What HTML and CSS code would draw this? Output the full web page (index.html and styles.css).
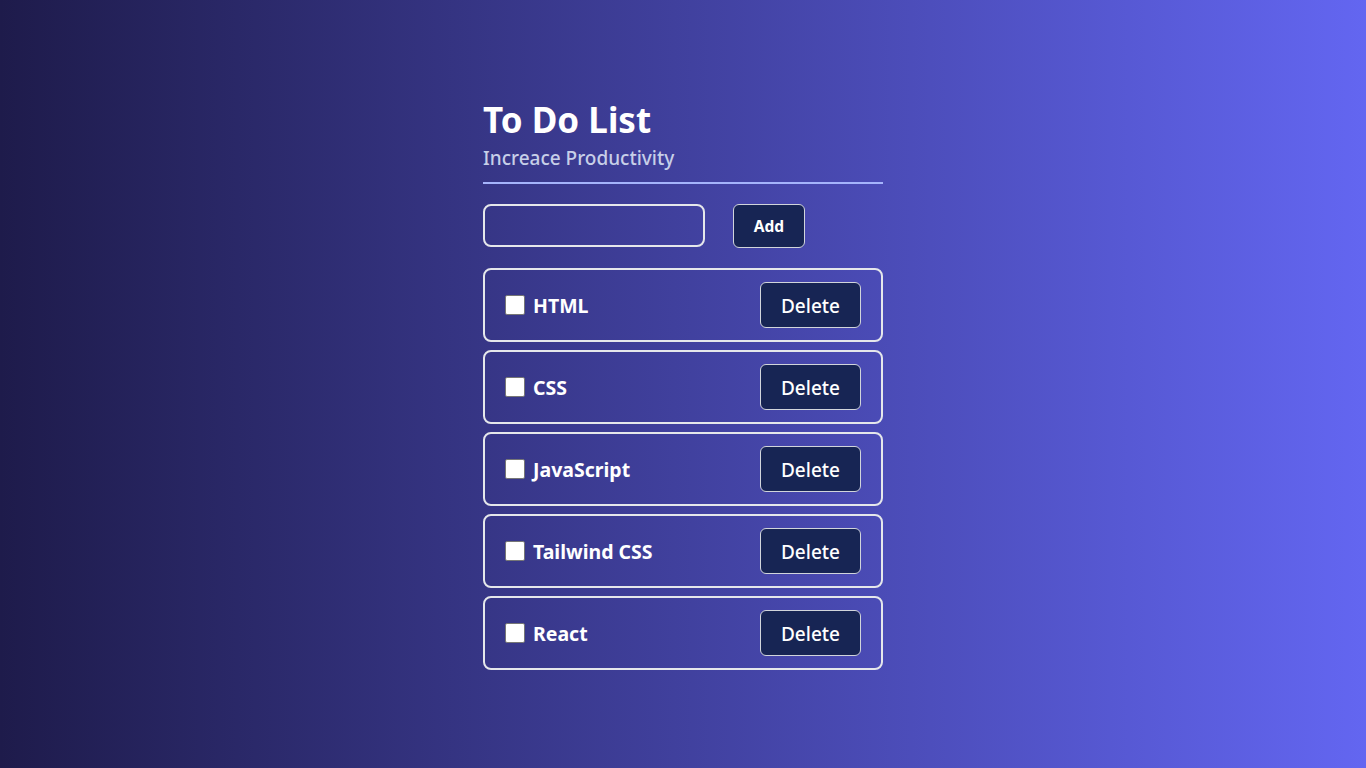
FILE: index.html
```html
<!DOCTYPE html>
<html lang="en">
<head>
<meta charset="utf-8">
<title>To Do List</title>
<link rel="stylesheet" href="styles.css">
</head>
<body>
<main class="app">
  <header class="head">
    <h1 class="title">To Do List</h1>
    <p class="subtitle">Increace Productivity</p>
  </header>
  <form class="add-row">
    <input class="add-input" type="text" aria-label="New task">
    <button class="add-btn" type="button">Add</button>
  </form>
  <ul class="list">
    <li class="item"><label class="item-label"><input class="check" type="checkbox"><span>HTML</span></label><button class="del-btn" type="button">Delete</button></li>
    <li class="item"><label class="item-label"><input class="check" type="checkbox"><span>CSS</span></label><button class="del-btn" type="button">Delete</button></li>
    <li class="item"><label class="item-label"><input class="check" type="checkbox"><span>JavaScript</span></label><button class="del-btn" type="button">Delete</button></li>
    <li class="item"><label class="item-label"><input class="check" type="checkbox"><span>Tailwind CSS</span></label><button class="del-btn" type="button">Delete</button></li>
    <li class="item"><label class="item-label"><input class="check" type="checkbox"><span>React</span></label><button class="del-btn" type="button">Delete</button></li>
  </ul>
</main>
</body>
</html>
```

FILE: styles.css
```css
* { box-sizing: border-box; }
html, body { height: 100%; }
body {
  margin: 0;
  min-height: 100vh;
  background: linear-gradient(to right, #1e1b4b, #6366f1);
  font-family: "Noto Sans", "Open Sans", sans-serif;
  color: #fff;
  display: flex;
  justify-content: center;
  align-items: flex-start;
}
.app {
  width: 400px;
  margin-top: 98px;
}
.head {
  border-bottom: 2px solid #a5b4fc;
  padding-bottom: 10px;
}
.title {
  margin: 0;
  font-size: 35px;
  line-height: 44px;
  font-weight: 700;
  letter-spacing: 0;
}
.subtitle {
  margin: 2px 0 0;
  font-size: 19px;
  line-height: 28px;
  color: #c7cfe8;
  font-weight: 500;
}
.add-row {
  display: flex;
  gap: 28px;
  margin-top: 20px;
}
.add-input {
  width: 222px;
  height: 43px;
  border: 2px solid #e5e7eb;
  border-radius: 8px;
  background: transparent;
  color: #fff;
  font: inherit;
  padding: 0 10px;
}
.add-btn {
  height: 44px;
  width: 72px;
  background: #172554;
  border: 1px solid #d1d5db;
  border-radius: 6px;
  color: #fff;
  font-family: inherit;
  font-size: 15.5px;
  font-weight: 700;
  cursor: pointer;
}
.list {
  list-style: none;
  margin: 20px 0 0;
  padding: 0;
  display: flex;
  flex-direction: column;
  gap: 8px;
}
.item {
  display: flex;
  align-items: center;
  justify-content: space-between;
  border: 2px solid #e5e7eb;
  border-radius: 8px;
  padding: 12px 20px;
}
.item-label {
  display: flex;
  align-items: center;
  gap: 8px;
  font-size: 19.5px;
  font-weight: 700;
  letter-spacing: 0;
}
.item-label span {
  padding-top: 1px;
}
.check {
  appearance: none;
  -webkit-appearance: none;
  margin: 0;
  width: 20px;
  height: 20px;
  background: #fff;
  border: 1px solid #767676;
  border-radius: 2px;
}
.del-btn {
  height: 46px;
  width: 101px;
  background: #172554;
  border: 1px solid #d1d5db;
  border-radius: 6px;
  color: #fff;
  font-family: inherit;
  font-size: 19px;
  font-weight: 500;
  padding-top: 2px;
  cursor: pointer;
}
```
